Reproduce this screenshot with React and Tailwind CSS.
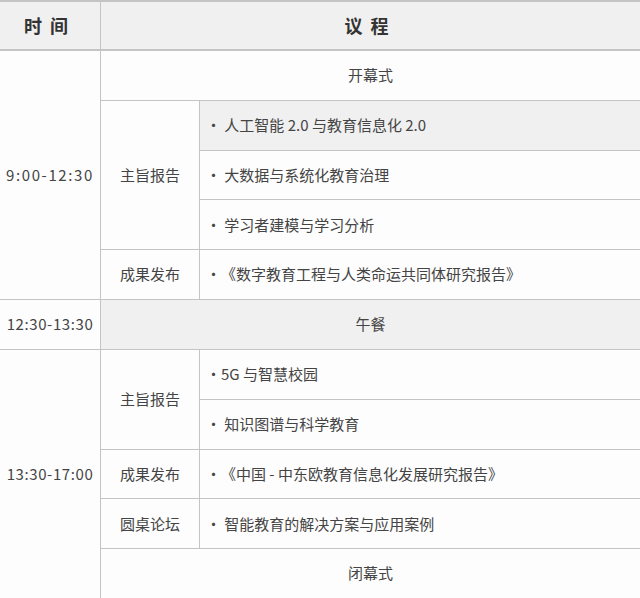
export default function App() {
  const f = { fontFamily: '"Noto Sans CJK SC", "Noto Sans", sans-serif' };
  const c = "flex items-center justify-center bg-[#fdfdfd]";
  const l = "flex items-center pl-[6px] bg-[#fdfdfd]";
  return (
    <div style={f} className="w-[640px] h-[598px] bg-[#c4c4c4] pt-[2px] text-[15px] text-[#444]">
      <div className="grid h-[596px] gap-px grid-cols-[100px_98px_1fr] grid-rows-[48px_repeat(11,1fr)]">
        <div className="flex items-center justify-center bg-[#f0f0f0] font-bold text-[18px] text-[#333] tracking-[8px] border-b border-[#c4c4c4]">时间</div>
        <div className="col-span-2 flex items-center justify-center bg-[#f0f0f0] font-bold text-[18px] text-[#333] tracking-[8px] border-b border-[#c4c4c4]">议程</div>
        <div className={c + " row-span-5 tracking-[1.6px]"}>9:00-12:30</div>
        <div className={c + " col-span-2"}>开幕式</div>
        <div className={c + " row-span-3"}>主旨报告</div>
        <div className={l + " !bg-[#f0f0f0]"}>• 人工智能 2.0 与教育信息化 2.0</div>
        <div className={l}>• 大数据与系统化教育治理</div>
        <div className={l}>• 学习者建模与学习分析</div>
        <div className={c}>成果发布</div>
        <div className={l}>•《数字教育工程与人类命运共同体研究报告》</div>
        <div className={c + " tracking-[0.6px]"}>12:30-13:30</div>
        <div className={c + " col-span-2 !bg-[#f0f0f0]"}>午餐</div>
        <div className={c + " row-span-5 tracking-[0.6px]"}>13:30-17:00</div>
        <div className={c + " row-span-2"}>主旨报告</div>
        <div className={l}>•5G 与智慧校园</div>
        <div className={l}>• 知识图谱与科学教育</div>
        <div className={c}>成果发布</div>
        <div className={l}>•《中国 - 中东欧教育信息化发展研究报告》</div>
        <div className={c}>圆桌论坛</div>
        <div className={l}>• 智能教育的解决方案与应用案例</div>
        <div className={c + " col-span-2"}>闭幕式</div>
      </div>
    </div>
  );
}
